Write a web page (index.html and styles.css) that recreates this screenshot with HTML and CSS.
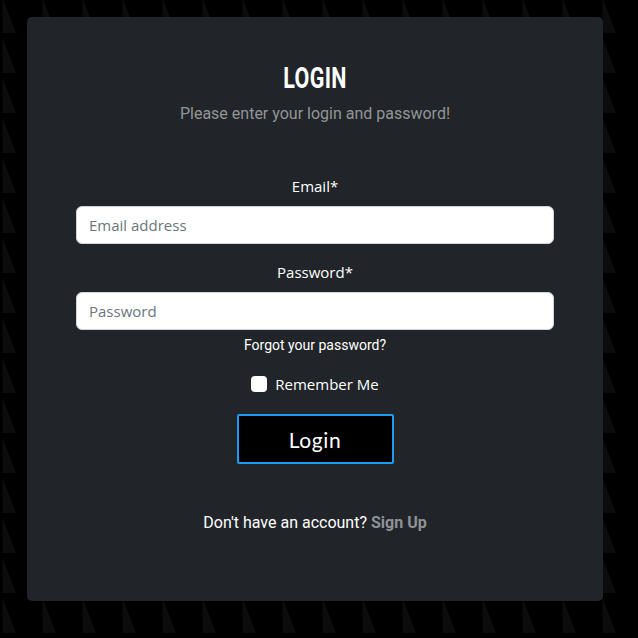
FILE: index.html
```html
<!DOCTYPE html>
<html lang="en">
<head>
<meta charset="utf-8">
<title>Login</title>
<link rel="stylesheet" href="styles.css">
</head>
<body>
<main class="card">
  <h1 class="title"><span class="title-text">LOGIN</span></h1>
  <p class="subtitle">Please enter your login and password!</p>
  <form class="form">
    <label class="label" for="email">Email*</label>
    <input class="input" id="email" type="email" placeholder="Email address">
    <label class="label label-pw" for="pw">Password*</label>
    <input class="input" id="pw" type="password" placeholder="Password">
    <a class="forgot" href="#">Forgot your password?</a>
    <div class="remember">
      <span class="check"></span>
      <span class="remember-text">Remember Me</span>
    </div>
    <button class="btn" type="button">Login</button>
  </form>
  <p class="signup">Don't have an account? <a class="signup-link" href="#">Sign Up</a></p>
</main>
</body>
</html>
```
FILE: styles.css
```css
html, body {
  margin: 0;
  padding: 0;
}
body {
  width: 638px;
  height: 638px;
  overflow: hidden;
  background-color: #000;
  background-image: url("data:image/svg+xml,%3Csvg xmlns='http://www.w3.org/2000/svg' width='40' height='40'%3E%3Cpolygon points='2.5,0 2.5,35 16,35' fill='%230c0c0c'/%3E%3C/svg%3E");
  background-position: 0 -2px;
  background-size: 40px 40px;
  font-family: Roboto, "Liberation Sans", sans-serif;
}
.card {
  box-sizing: border-box;
  margin: 17px 0 0 27px;
  width: 576px;
  height: 584px;
  background: #212529;
  border-radius: 5px;
  padding: 43px 49px 0;
  display: flex;
  flex-direction: column;
  align-items: center;
}
.title {
  margin: 0;
  height: 36px;
  line-height: 36px;
  font-size: 29px;
  font-weight: 700;
  color: #fff;
  text-align: center;
}
.title-text {
  display: inline-block;
  transform: scaleX(0.74);
  letter-spacing: 0.5px;
}
.subtitle {
  margin: 6px 0 0;
  line-height: 24px;
  font-size: 16px;
  color: #929598;
}
.form {
  width: 100%;
  display: flex;
  flex-direction: column;
  align-items: center;
  margin-top: 48px;
}
.label {
  line-height: 24px;
  font-family: "Open Sans", sans-serif;
  font-size: 15px;
  color: #fff;
}
.label-pw {
  margin-top: 16px;
}
.input {
  box-sizing: border-box;
  width: 100%;
  height: 38px;
  margin-top: 8px;
  border: 1px solid #ced4da;
  border-radius: 6px;
  background: #fff;
  padding: 0 12px;
  font-family: "Open Sans", sans-serif;
  font-size: 15px;
  color: #212529;
  outline: none;
}
.input::placeholder {
  color: #6c757d;
}
.forgot {
  margin-top: 5px;
  line-height: 20px;
  font-size: 14px;
  font-weight: 400;
  color: #fff;
  text-decoration: none;
}
.remember {
  margin-top: 17px;
  display: flex;
  align-items: center;
  gap: 8px;
  line-height: 24px;
}
.check {
  width: 16px;
  height: 16px;
  background: #fff;
  border-radius: 4px;
}
.remember-text {
  font-family: "Open Sans", sans-serif;
  font-size: 15px;
  color: #fff;
}
.btn {
  margin-top: 18px;
  box-sizing: border-box;
  width: 157px;
  height: 50px;
  background: #000;
  border: 2px solid #1e9cf0;
  border-radius: 2px;
  color: #fff;
  font-family: Lato, "Open Sans", sans-serif;
  font-size: 21px;
  letter-spacing: 0.6px;
  padding: 0;
}
.signup {
  margin: 47px 0 0;
  line-height: 24px;
  font-size: 16px;
  font-weight: 400;
  color: #fff;
}
.signup-link {
  color: #8f9296;
  font-weight: 700;
  text-decoration: none;
}
```
